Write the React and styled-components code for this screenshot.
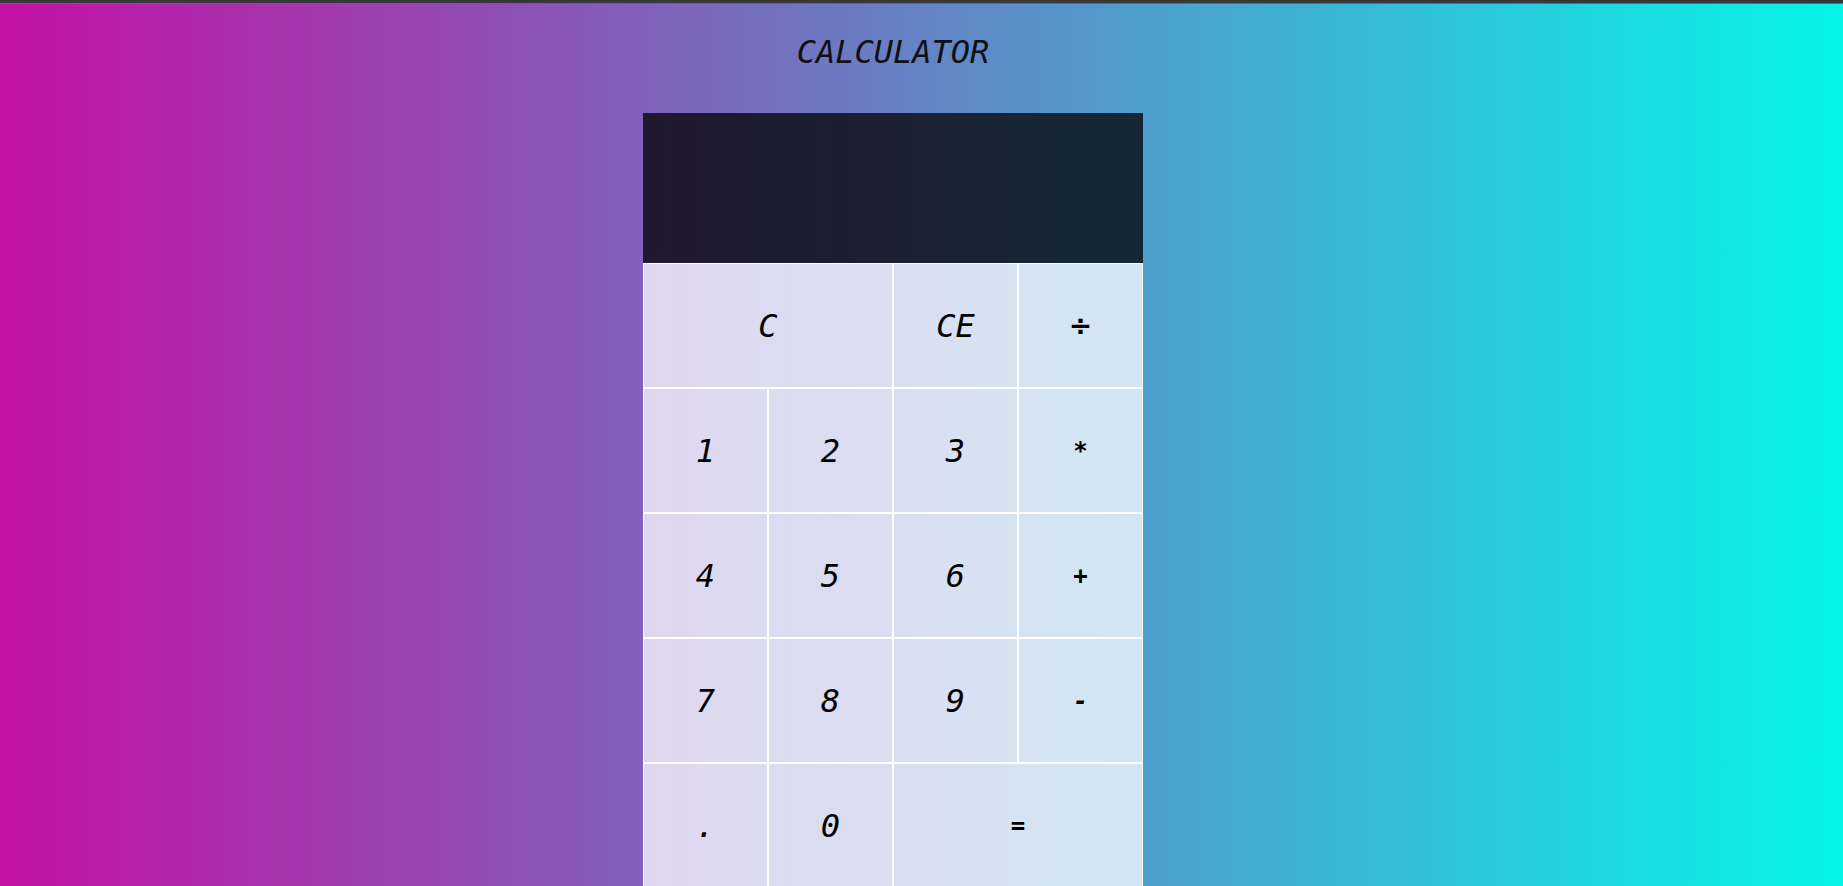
import React, { useState } from "react";
import styled, { createGlobalStyle } from "styled-components";

const GlobalStyle = createGlobalStyle`
  *, *::before, *::after {
    box-sizing: border-box;
  }

  body {
    margin: 0;
    font-family: "DejaVu Sans Mono", "Liberation Mono", monospace;
    font-size: 32px;
    font-style: italic;
  }
`;

const Page = styled.div`
  min-height: 100vh;
  border-top: 3px solid #38383a;
  background: linear-gradient(to right, #c411a3, #05f5e8);
  box-shadow: inset 0 1px #67676d;
`;

const Content = styled.main`
  display: flex;
  flex-direction: column;
  align-items: center;
  margin-right: 57px;
`;

const Title = styled.h1`
  margin: 0;
  padding: 29px 0 41px;
  color: #111111;
  font-size: 32px;
  font-weight: 400;
  line-height: 40px;
`;

const Calculator = styled.section`
  width: 500px;
  max-width: 100%;
`;

const Display = styled.output`
  display: flex;
  align-items: center;
  justify-content: flex-end;
  height: 150px;
  padding: 0 16px;
  overflow: hidden;
  background: rgba(0, 0, 0, 0.75);
  color: #ffffff;
`;

const Keypad = styled.div`
  display: grid;
  grid-template-columns: repeat(4, 1fr);
  grid-auto-rows: 125px;
`;

const Key = styled.button`
  grid-column: span ${({ $span }) => $span || 1};
  padding: 0;
  border: 1px solid #ffffff;
  border-radius: 0;
  background: rgba(255, 255, 255, 0.75);
  color: #000000;
  font: inherit;
  cursor: pointer;

  &:hover {
    background: rgba(255, 255, 255, 0.9);
  }
`;

const OperatorKey = styled(Key)`
  font-size: 24px;
  font-weight: 700;
`;

const DivideKey = styled(Key)`
  font-family: "DejaVu Sans", sans-serif;
  font-size: 28px;
  font-style: normal;
  font-weight: 700;
`;

const keys = [
  { label: "C", span: 2 },
  { label: "CE" },
  { label: "÷", as: DivideKey },
  { label: "1" },
  { label: "2" },
  { label: "3" },
  { label: "*", as: OperatorKey },
  { label: "4" },
  { label: "5" },
  { label: "6" },
  { label: "+", as: OperatorKey },
  { label: "7" },
  { label: "8" },
  { label: "9" },
  { label: "-", as: OperatorKey },
  { label: "." },
  { label: "0" },
  { label: "=", span: 2, as: OperatorKey },
];

function evaluate(text) {
  const tokens = text.match(/\d*\.?\d+|[÷*+-]/g) || [];
  const terms = [];
  let operator = "+";
  tokens.forEach((token) => {
    if (/^[÷*+-]$/.test(token)) {
      operator = token;
      return;
    }
    const value = Number(token);
    if (operator === "*") terms.push(terms.pop() * value);
    else if (operator === "÷") terms.push(terms.pop() / value);
    else terms.push(operator === "-" ? -value : value);
  });
  return terms.length ? String(terms.reduce((a, b) => a + b, 0)) : "";
}

export default function App() {
  const [entry, setEntry] = useState("");

  const press = (label) => {
    if (label === "C") setEntry("");
    else if (label === "CE") setEntry((value) => value.slice(0, -1));
    else if (label === "=") setEntry(evaluate);
    else setEntry((value) => value + label);
  };

  return (
    <Page>
      <GlobalStyle />
      <Content>
        <Title>CALCULATOR</Title>
        <Calculator aria-label="Calculator">
          <Display>{entry}</Display>
          <Keypad>
            {keys.map(({ label, span, as: KeyType = Key }) => (
              <KeyType key={label} type="button" $span={span} onClick={() => press(label)}>
                {label}
              </KeyType>
            ))}
          </Keypad>
        </Calculator>
      </Content>
    </Page>
  );
}
